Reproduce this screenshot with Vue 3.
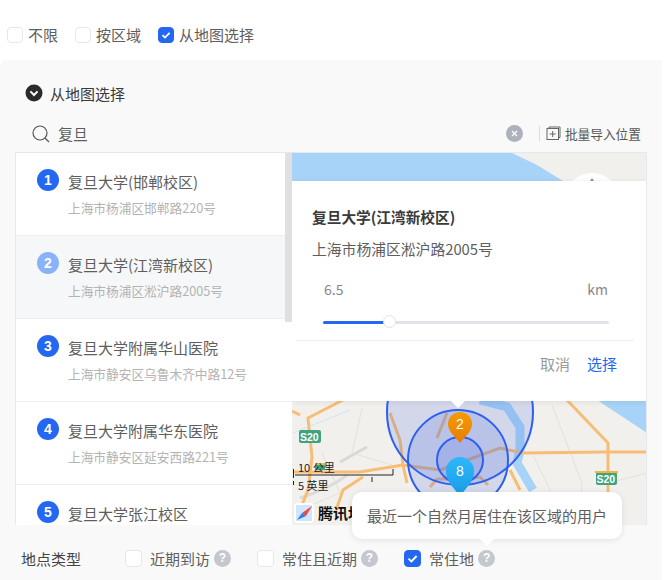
<template>
  <div class="page">
    <div class="mode-row">
      <label v-for="mode in modes" :key="mode.label" class="mode">
        <span class="box small" :class="{ checked: mode.checked }">
          <svg v-if="mode.checked" viewBox="0 0 16 16" width="16" height="16">
            <path d="M4.5 8.2 7 10.6 11.6 5.8" fill="none" stroke="#fff" stroke-width="1.8" />
          </svg>
        </span>
        {{ mode.label }}
      </label>
    </div>

    <div class="panel">
      <div class="panel-head">
        <svg viewBox="0 0 18 18" width="18" height="18">
          <circle cx="9" cy="9" r="8.5" fill="#2b2b2d" />
          <path d="M5.4 7.4 9 11 12.6 7.4" fill="none" stroke="#fff" stroke-width="2" />
        </svg>
        <span>从地图选择</span>
      </div>

      <div class="search-row">
        <svg class="search-icon" viewBox="0 0 18 18" width="18" height="18">
          <circle cx="8" cy="8" r="7" fill="none" stroke="#555" stroke-width="1.2" />
          <path d="M13 13 17 17" stroke="#555" stroke-width="1.2" />
        </svg>
        <span class="keyword">复旦</span>
        <span class="clear">
          <svg viewBox="0 0 17 17" width="17" height="17">
            <circle cx="8.5" cy="8.5" r="8.5" fill="#adb1bb" />
            <path d="M6 6 11 11M11 6 6 11" stroke="#fff" stroke-width="1.2" />
          </svg>
        </span>
        <span class="divider"></span>
        <svg viewBox="0 0 15 15" width="15" height="15">
          <path d="M3 2.5V1H14V11.5H12.5" fill="none" stroke="#666" />
          <rect x="1" y="2.5" width="11.5" height="11" fill="none" stroke="#666" />
          <path d="M6.7 5V11M3.7 8H9.7" stroke="#666" />
        </svg>
        <span class="import">批量导入位置</span>
      </div>

      <div class="picker">
        <div class="list">
          <div
            v-for="(place, index) in places"
            :key="place.name"
            class="place"
            :class="{ active: index === 1 }"
          >
            <span class="badge">{{ index + 1 }}</span>
            <div class="place-text">
              <div class="place-name">{{ place.name }}</div>
              <div v-if="place.addr" class="place-addr">{{ place.addr }}</div>
            </div>
          </div>
          <div class="scrollbar"></div>
        </div>

        <div class="map">
          <svg class="map-bg" viewBox="0 0 355 372" width="355" height="372">
            <defs>
              <linearGradient id="pinOrange" x1="0" y1="0" x2="0" y2="1">
                <stop offset="0" stop-color="#f59c00" />
                <stop offset="1" stop-color="#e87c06" />
              </linearGradient>
              <linearGradient id="pinBlue" x1="0" y1="0" x2="0" y2="1">
                <stop offset="0" stop-color="#2db8f8" />
                <stop offset="1" stop-color="#1a9be6" />
              </linearGradient>
            </defs>
            <rect width="355" height="372" fill="#f1f0ec" />
            <path d="M0 0H220L245 12 271 28H0Z" fill="#a6d3f7" />
            <circle cx="300" cy="48" r="28" fill="#fff" />
            <path d="M300 25 302 28H298Z" fill="#8a93a3" />
            <path d="M305 247 355 280V247Z" fill="#a6d3f7" />
            <path d="M188 247 215 254 228 274V297L225 310 241 337" fill="none" stroke="#a6d3f7" stroke-width="9" />
            <path d="M1 280 58 257" fill="none" stroke="#cfe4f5" stroke-width="1" />

            <g fill="none" stroke="#e3e1da" stroke-width="1">
              <path d="M30 300 48 340 0 360" />
              <path d="M260 252 290 330 288 372" />
              <path d="M70 255 60 300 100 312" />
              <path d="M316 330 355 320M240 300 275 372" />
            </g>
            <path d="M48 309 75 294" fill="none" stroke="#d8d8d6" stroke-width="3" />
            <path d="M8 345C25 340 45 330 55 322" fill="none" stroke="#dcdcda" stroke-width="3" />

            <g fill="none" stroke="#f8bd75" stroke-width="3">
              <path d="M0 258 8 262" />
              <path d="M51 247 16 265 20 304 16 337 8 357" />
              <path d="M1 319H68L111 312 148 317 208 295 231 300 315 299H355" />
              <path d="M275 247 316 290V372" />
              <path d="M98 260 108 287 111 312 115 330" />
              <path d="M71 324 51 337 43 360" />
              <path d="M218 317 228 337" />
              <path d="M155 260 145 285" />
              <path d="M138 334 145 326H175L188 324 196 332" />
            </g>

            <circle cx="168" cy="259" r="73" fill="rgba(72,103,226,.18)" stroke="#2d5ff0" stroke-width="2" />
            <circle cx="166" cy="307" r="50" fill="rgba(72,103,226,.18)" stroke="#2d5ff0" stroke-width="2" />
            <circle cx="168" cy="307" r="23" fill="rgba(72,103,226,.18)" stroke="#2d5ff0" stroke-width="2" />

            <rect x="7" y="277" width="22" height="13" rx="2" fill="#3ea37f" />
            <rect x="304" y="319" width="21" height="13" rx="2" fill="#3ea37f" />
            <path d="M304 320V319H325V320" stroke="#f2b53a" fill="none" stroke-width="2" />
            <rect x="23" y="310" width="10" height="7" fill="#3ea37f" />
            <rect x="23" y="310" width="10" height="2" fill="#f2b53a" />
            <g fill="#fff" font-family="Liberation Sans, sans-serif" font-size="10.5" font-weight="700">
              <text x="8" y="288">S20</text>
              <text x="304.5" y="330">S20</text>
            </g>

            <path d="M168 290C160 281 156 277 156 271A12 12 0 0 1 180 271C180 277 176 281 168 290Z" fill="url(#pinOrange)" />
            <path d="M168 343C160 333 154 328 154 318A14 14 0 0 1 182 318C182 328 176 333 168 343Z" fill="url(#pinBlue)" />
            <g fill="#fff" font-family="Liberation Sans, sans-serif" font-size="14" text-anchor="middle">
              <text x="168" y="276">2</text>
              <text x="168" y="323">8</text>
            </g>
            <path d="M1.5 316V325M1.5 328V332M3 322H101V316M80 324V329" fill="none" stroke="#222" stroke-width="1" />
            <g fill="#222" font-family="Noto Sans CJK SC, sans-serif" font-size="11">
              <text x="6" y="319">10 公里</text>
              <text x="6" y="337">5 英里</text>
            </g>
            <rect x="2" y="350" width="20" height="20" rx="4" fill="#fff" />
            <path d="M4 352H20V368H4Z" fill="#cfe6fb" />
            <path d="M20 353 10 360 14 363Z" fill="#f0483e" />
            <path d="M5 367 10 360 14 363Z" fill="#2f7bf0" />
            <text x="26" y="366" fill="#111" font-family="Noto Sans CJK SC, sans-serif" font-size="15" font-weight="700">腾讯地图</text>
          </svg>

          <div class="card">
            <div class="card-title">复旦大学(江湾新校区)</div>
            <div class="card-addr">上海市杨浦区淞沪路2005号</div>
            <div class="range-values">
              <span>6.5</span>
              <span>km</span>
            </div>
            <div class="slider">
              <div class="slider-fill" :style="{ width: rangePercent + '%' }"></div>
              <div class="slider-thumb" :style="{ left: rangePercent + '%' }"></div>
            </div>
            <div class="card-actions">
              <span class="cancel">取消</span>
              <span class="confirm">选择</span>
            </div>
            <div class="card-arrow"></div>
          </div>
        </div>
      </div>

      <div class="type-row">
        <span class="type-title">地点类型</span>
        <label v-for="type in types" :key="type.label" class="type">
          <span class="box" :class="{ checked: type.checked }">
            <svg v-if="type.checked" viewBox="0 0 17 17" width="17" height="17">
              <path d="M4.5 8.6 7.4 11.4 12.6 6" fill="none" stroke="#fff" stroke-width="1.9" />
            </svg>
          </span>
          <span class="type-label">{{ type.label }}</span>
          <span class="help">?</span>
          <div v-if="type.tip" class="tooltip">{{ type.tip }}</div>
        </label>
      </div>
    </div>
  </div>
</template>

<script setup>
const modes = [
  { label: "不限", checked: false },
  { label: "按区域", checked: false },
  { label: "从地图选择", checked: true }
];

const places = [
  { name: "复旦大学(邯郸校区)", addr: "上海市杨浦区邯郸路220号" },
  { name: "复旦大学(江湾新校区)", addr: "上海市杨浦区淞沪路2005号" },
  { name: "复旦大学附属华山医院", addr: "上海市静安区乌鲁木齐中路12号" },
  { name: "复旦大学附属华东医院", addr: "上海市静安区延安西路221号" },
  { name: "复旦大学张江校区", addr: "" }
];

const types = [
  { label: "近期到访", checked: false },
  { label: "常住且近期", checked: false },
  { label: "常住地", checked: true, tip: "最近一个自然月居住在该区域的用户" }
];

const rangePercent = 23;
</script>

<style>
html,
body {
  background: #fff;
}
</style>

<style scoped>
.page {
  width: 670px;
  height: 580px;
  overflow: hidden;
  background: #fff;
  font-family: "Noto Sans CJK SC", "Noto Sans", sans-serif;
  font-size: 15px;
  color: #5e5e5e;
}

.mode-row {
  display: flex;
  height: 60px;
  padding: 24px 0 0 7px;
  box-sizing: border-box;
  line-height: 22px;
}

.mode {
  display: flex;
  align-items: center;
  gap: 5px;
  height: 22px;
  margin-right: 17px;
}

.box {
  flex: none;
  width: 17px;
  height: 17px;
  box-sizing: border-box;
  border: 1px solid #e6e7ec;
  border-radius: 4px;
  background: #fff;
  display: flex;
}

.box.small {
  width: 16px;
  height: 16px;
}

.box svg {
  margin: -1px;
}

.box.checked {
  background: #2468f2;
  border-color: #2468f2;
}

.panel {
  width: 662px;
  height: 520px;
  overflow: hidden;
  background: #f9f9fa;
  border-radius: 6px 0 0 0;
  padding: 22px 15px 0;
  box-sizing: border-box;
}

.panel-head {
  display: flex;
  align-items: center;
  gap: 7px;
  height: 22px;
  padding-left: 10px;
  color: #3a3a3a;
}

.search-row {
  display: flex;
  align-items: center;
  height: 37px;
  margin-top: 11px;
  padding: 0 6px 0 17px;
}

.search-icon {
  margin-right: 8px;
}

.keyword {
  flex: 1;
}

.clear {
  display: flex;
  margin-right: 16px;
}

.divider {
  width: 1px;
  height: 15px;
  background: #ddd;
  margin-right: 6px;
}

.import {
  margin-left: 4px;
  font-size: 12.7px;
  color: #555;
}

.picker {
  display: flex;
  width: 632px;
  height: 373px;
  box-sizing: border-box;
  border: 1px solid #e6e8ee;
  border-bottom: 0;
  background: #fff;
}

.list {
  position: relative;
  flex: none;
  width: 276px;
  overflow: hidden;
}

.place {
  display: flex;
  gap: 9px;
  height: 83px;
  box-sizing: border-box;
  padding: 16px 0 0 21px;
  border-bottom: 1px solid #eceef2;
}

.place.active {
  background: #f6f7f9;
}

.badge {
  flex: none;
  width: 22px;
  height: 22px;
  border-radius: 50%;
  background: #2468f2;
  color: #fff;
  font-family: "Liberation Sans", sans-serif;
  font-size: 14px;
  font-weight: 700;
  line-height: 22px;
  text-align: center;
}

.active .badge {
  background: #8ab2fb;
}

.place-name {
  line-height: 22px;
  margin-top: 2px;
}

.place-addr {
  margin-top: 6px;
  font-size: 12.7px;
  line-height: 18px;
  color: #b3b3b3;
}

.scrollbar {
  position: absolute;
  top: 0;
  right: 0;
  width: 7px;
  height: 169px;
  background: #e0e0e0;
}

.map {
  position: relative;
  flex: 1;
  overflow: hidden;
}

.map-bg {
  display: block;
}

.card {
  position: absolute;
  top: 28px;
  left: 0;
  right: 0;
  height: 220px;
  box-sizing: border-box;
  padding: 25px 21px 0 20px;
  background: #fff;
  box-shadow: 0 1px 6px rgba(0, 0, 0, 0.08);
}

.card-title {
  font-size: 14.7px;
  font-weight: 700;
  line-height: 22px;
  color: #3a3a3a;
}

.card-addr {
  margin-top: 10px;
  font-size: 14.8px;
  line-height: 22px;
}

.range-values {
  display: flex;
  justify-content: space-between;
  margin-top: 18px;
  padding: 0 17px 0 12px;
  font-size: 14px;
  line-height: 22px;
  color: #888;
}

.slider {
  position: relative;
  height: 3px;
  margin: 21px 16px 0 11px;
  background: #e2e3e8;
  border-radius: 2px;
}

.slider-fill {
  height: 3px;
  background: #2468f2;
  border-radius: 2px;
}

.slider-thumb {
  position: absolute;
  top: -6px;
  width: 13px;
  height: 13px;
  margin-left: -6px;
  box-sizing: border-box;
  border: 1px solid #e2e3e8;
  border-radius: 50%;
  background: #fff;
}

.card-actions {
  display: flex;
  justify-content: flex-end;
  gap: 17px;
  margin: 16px -9px 0 -16px;
  padding: 12px 17px 0 0;
  border-top: 1px solid #f0f0f2;
  line-height: 22px;
}

.cancel {
  color: #999;
}

.confirm {
  color: #2468f2;
}

.card-arrow {
  position: absolute;
  left: 159px;
  bottom: -7px;
  border: 7px solid transparent;
  border-bottom: 0;
  border-top-color: #fff;
}

.type-row {
  display: flex;
  align-items: center;
  height: 66px;
  padding-left: 6px;
  font-size: 15px;
}

.type-title {
  width: 104px;
  color: #444;
}

.type {
  position: relative;
  display: flex;
  align-items: center;
  height: 22px;
  margin-right: 26px;
}

.type-label {
  margin: 0 4px 0 8px;
}

.help {
  width: 17px;
  height: 17px;
  border-radius: 50%;
  background: #c4c7ce;
  color: #fff;
  font-family: "Liberation Sans", sans-serif;
  font-size: 12px;
  font-weight: 700;
  line-height: 17px;
  text-align: center;
}

.tooltip {
  position: absolute;
  right: -127px;
  bottom: 30px;
  width: 270px;
  height: 47px;
  border-radius: 10px;
  background: #fff;
  box-shadow: 0 1px 6px rgba(0, 0, 0, 0.1);
  line-height: 47px;
  text-align: center;
  white-space: nowrap;
}

.tooltip::after {
  content: "";
  position: absolute;
  left: 128px;
  bottom: -7px;
  border: 7px solid transparent;
  border-bottom: 0;
  border-top-color: #fff;
}
</style>
